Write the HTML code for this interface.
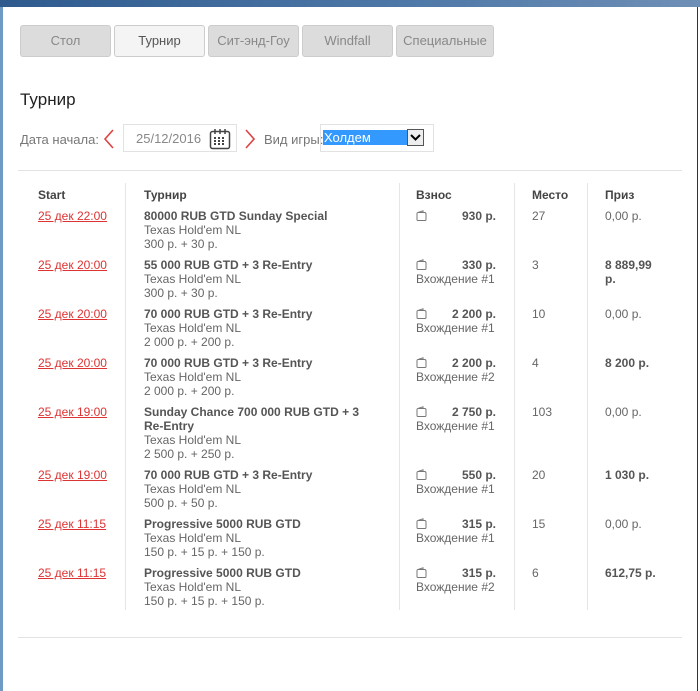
<!DOCTYPE html>
<html><head><meta charset="utf-8"><style>
*{margin:0;padding:0;box-sizing:border-box}
body{width:700px;height:691px;background:#fff;font-family:"Liberation Sans",sans-serif;position:relative;overflow:hidden;color:#666;font-size:12px}
.tb{position:absolute;left:0;top:0;width:700px;height:7px;background:linear-gradient(90deg,#2f5a8e,#4f79a8 60%,#6f8fb6)}
.lb{position:absolute;left:0;top:7px;width:3px;height:684px;background:#6e9ac4}
.rb{position:absolute;right:2px;top:7px;width:1px;height:684px;background:#333}
.tab{position:absolute;top:25px;height:32px;border:1px solid #ccc;border-radius:3px;background:#dcdcdc;color:#888;font-size:13px;text-align:center;line-height:30px}
.tab.a{background:#f4f4f4;color:#555}
h1{position:absolute;left:20px;top:90px;font-size:17px;font-weight:normal;color:#222}
.a{position:absolute}
.hl{position:absolute;left:18px;width:664px;height:1px;background:#e3e3e3}
.vl{position:absolute;top:183px;height:427px;width:1px;background:#e6e6e6}
.row{position:absolute;left:0;width:700px;line-height:14px}
.row div{position:absolute;top:0}
.d{left:38px;color:#d33;text-decoration:underline}
.n{left:144px;width:230px}
.n b{color:#555}
.ic{position:absolute;left:416px;width:11px;height:11px;top:1px}
.am{left:430px;width:66px;text-align:right;font-weight:bold;color:#555}
.en{left:416px;top:14px!important}
.pl{left:532px}
.pr{left:605px;width:52px}
.pr.b{font-weight:bold;color:#555}
.th{position:absolute;top:188px;font-weight:bold;color:#444}
</style></head><body>
<div class="tb"></div><div class="lb"></div><div class="rb"></div>
<div class="tab" style="left:20px;width:91px">Стол</div>
<div class="tab a" style="left:114px;width:91px">Турнир</div>
<div class="tab" style="left:208px;width:91px">Сит-энд-Гоу</div>
<div class="tab" style="left:302px;width:91px">Windfall</div>
<div class="tab" style="left:396px;width:98px">Специальные</div>
<h1>Турнир</h1>
<div class="a" style="left:20px;top:132px;font-size:13px;color:#777">Дата начала:</div>
<svg class="a" style="left:102px;top:128px" width="14" height="22"><path d="M11 2 L3 11 L11 20" fill="none" stroke="#d44" stroke-width="1.6"/></svg>
<div class="a" style="left:123px;top:124px;width:114px;height:28px;border:1px solid #e2e2e2"></div>
<div class="a" style="left:136px;top:131px;font-size:13px;color:#888">25/12/2016</div>
<svg class="a" style="left:209px;top:128px" width="22" height="22"><rect x="1.5" y="3.5" width="19" height="17" rx="2" fill="none" stroke="#444" stroke-width="1.5"/><path d="M6 1v5M11 1v5M16 1v5" stroke="#444" stroke-width="1.5"/><g fill="#444"><rect x="5" y="9" width="2" height="2"/><rect x="9" y="9" width="2" height="2"/><rect x="13" y="9" width="2" height="2"/><rect x="5" y="12" width="2" height="2"/><rect x="9" y="12" width="2" height="2"/><rect x="13" y="12" width="2" height="2"/><rect x="5" y="15" width="2" height="2"/><rect x="9" y="15" width="2" height="2"/><rect x="13" y="15" width="2" height="2"/></g></svg>
<svg class="a" style="left:243px;top:128px" width="14" height="22"><path d="M3 2 L11 11 L3 20" fill="none" stroke="#d44" stroke-width="1.6"/></svg>
<div class="a" style="left:264px;top:132px;font-size:13px;color:#777">Вид игры:</div>
<div class="a" style="left:320px;top:124px;width:114px;height:28px;border:1px solid #e2e2e2"></div>
<div class="a" style="left:323px;top:130px;width:84px;height:15px;background:#3399ff;color:#fff;font-size:13px;line-height:15px;padding-left:1px">Холдем</div>
<div class="a" style="left:407px;top:129px;width:17px;height:17px;border:1px solid #555;background:#eee"><svg width="15" height="15"><path d="M3 5l4.5 4.5L12 5" fill="none" stroke="#000" stroke-width="2"/></svg></div>
<div class="hl" style="top:170px"></div>
<div class="hl" style="top:637px"></div>
<div class="vl" style="left:125px"></div><div class="vl" style="left:399px"></div><div class="vl" style="left:514px"></div><div class="vl" style="left:587px"></div>
<div class="th" style="left:38px">Start</div><div class="th" style="left:144px">Турнир</div><div class="th" style="left:416px">Взнос</div><div class="th" style="left:532px">Место</div><div class="th" style="left:605px">Приз</div>
<svg width="0" height="0" style="position:absolute"><defs><symbol id="w" viewBox="0 0 11 11"><path d="M2 2.5h6.5a1.5 1.5 0 0 1 1.5 1.5v5.5a1 1 0 0 1-1 1H2a1 1 0 0 1-1-1V3.5a1 1 0 0 1 1-1zM2 2.5L7 .8v1.7" fill="none" stroke="#777" stroke-width="1"/></symbol></defs></svg>

<div class="row" style="top:209px"><div class="d">25 дек 22:00</div><div class="n"><b>80000 RUB GTD Sunday Special</b><br>Texas Hold'em NL<br>300 р. + 30 р.</div><svg class="ic"><use href="#w"/></svg><div class="am">930 р.</div><div class="pl">27</div><div class="pr">0,00 р.</div></div>
<div class="row" style="top:258px"><div class="d">25 дек 20:00</div><div class="n"><b>55 000 RUB GTD + 3 Re-Entry</b><br>Texas Hold'em NL<br>300 р. + 30 р.</div><svg class="ic"><use href="#w"/></svg><div class="am">330 р.</div><div class="en">Вхождение #1</div><div class="pl">3</div><div class="pr b">8 889,99 р.</div></div>
<div class="row" style="top:307px"><div class="d">25 дек 20:00</div><div class="n"><b>70 000 RUB GTD + 3 Re-Entry</b><br>Texas Hold'em NL<br>2 000 р. + 200 р.</div><svg class="ic"><use href="#w"/></svg><div class="am">2 200 р.</div><div class="en">Вхождение #1</div><div class="pl">10</div><div class="pr">0,00 р.</div></div>
<div class="row" style="top:356px"><div class="d">25 дек 20:00</div><div class="n"><b>70 000 RUB GTD + 3 Re-Entry</b><br>Texas Hold'em NL<br>2 000 р. + 200 р.</div><svg class="ic"><use href="#w"/></svg><div class="am">2 200 р.</div><div class="en">Вхождение #2</div><div class="pl">4</div><div class="pr b">8 200 р.</div></div>
<div class="row" style="top:405px"><div class="d">25 дек 19:00</div><div class="n"><b>Sunday Chance 700 000 RUB GTD + 3 Re-Entry</b><br>Texas Hold'em NL<br>2 500 р. + 250 р.</div><svg class="ic"><use href="#w"/></svg><div class="am">2 750 р.</div><div class="en">Вхождение #1</div><div class="pl">103</div><div class="pr">0,00 р.</div></div>
<div class="row" style="top:468px"><div class="d">25 дек 19:00</div><div class="n"><b>70 000 RUB GTD + 3 Re-Entry</b><br>Texas Hold'em NL<br>500 р. + 50 р.</div><svg class="ic"><use href="#w"/></svg><div class="am">550 р.</div><div class="en">Вхождение #1</div><div class="pl">20</div><div class="pr b">1 030 р.</div></div>
<div class="row" style="top:517px"><div class="d">25 дек 11:15</div><div class="n"><b>Progressive 5000 RUB GTD</b><br>Texas Hold'em NL<br>150 р. + 15 р. + 150 р.</div><svg class="ic"><use href="#w"/></svg><div class="am">315 р.</div><div class="en">Вхождение #1</div><div class="pl">15</div><div class="pr">0,00 р.</div></div>
<div class="row" style="top:566px"><div class="d">25 дек 11:15</div><div class="n"><b>Progressive 5000 RUB GTD</b><br>Texas Hold'em NL<br>150 р. + 15 р. + 150 р.</div><svg class="ic"><use href="#w"/></svg><div class="am">315 р.</div><div class="en">Вхождение #2</div><div class="pl">6</div><div class="pr b">612,75 р.</div></div>
</body></html>
